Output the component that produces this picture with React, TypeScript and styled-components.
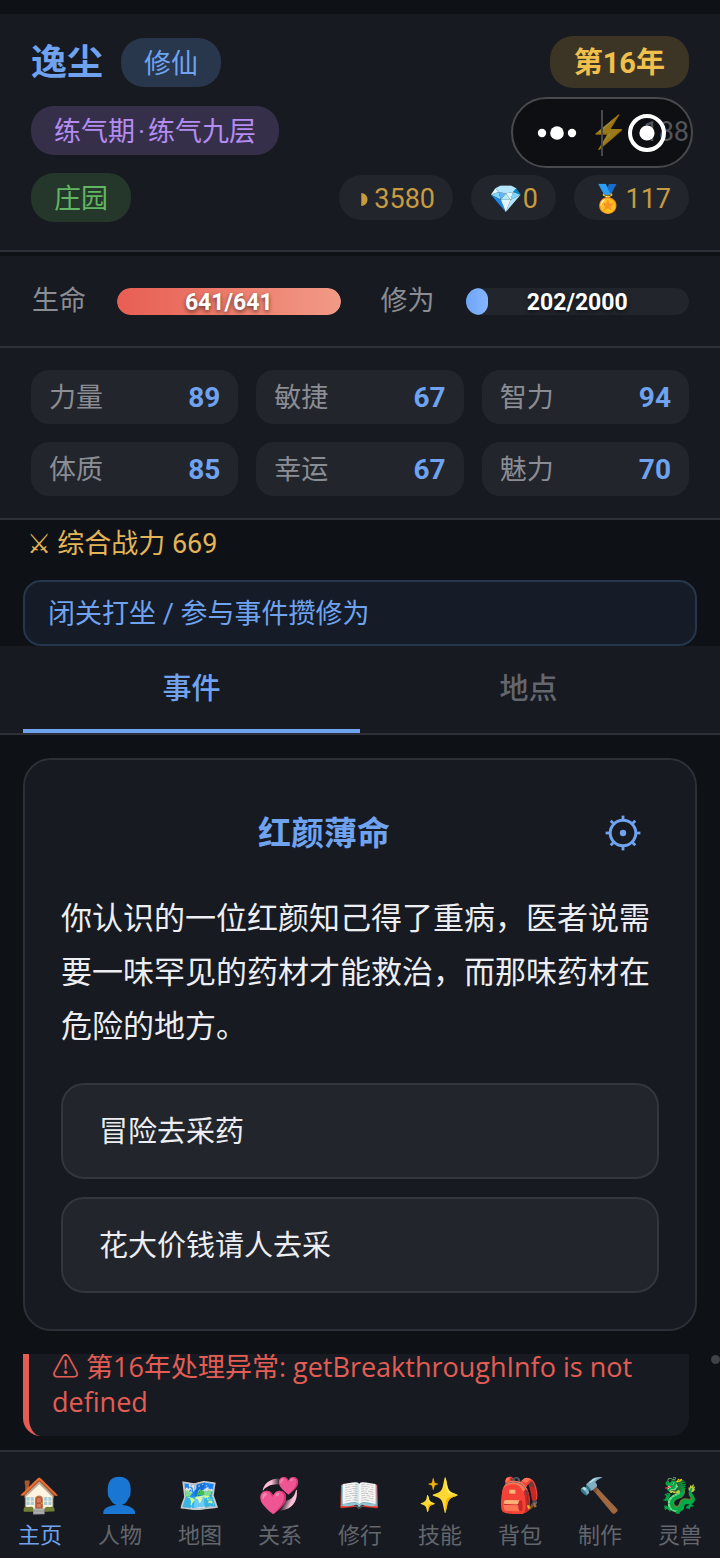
import React, { useState } from 'react';
import styled, { createGlobalStyle } from 'styled-components';

/* ───────────────────────────
   Theme
   ─────────────────────────── */
const COLOR_PAGE = '#0e1116';
const COLOR_PANEL = '#171a21';
const COLOR_CHIP = '#22252c';
const COLOR_LINE = '#2d3037';
const COLOR_BLUE = '#6fa3f0';
const COLOR_MUTED = '#8a8d94';
const COLOR_RED = '#e35d54';

const GlobalStyle = createGlobalStyle`
  *, *::before, *::after {
    box-sizing: border-box;
  }

  body {
    margin: 0;
    background: ${COLOR_PAGE};
    color: #eceef2;
    font-family: Roboto, 'Noto Sans CJK SC', 'Noto Color Emoji', sans-serif;
    font-size: 27px;
    line-height: 36px;
  }

  button {
    font: inherit;
    color: inherit;
    border: none;
    background: none;
    padding: 0;
    cursor: pointer;
  }
`;

/* ───────────────────────────
   Page
   ─────────────────────────── */
const Page = styled.div`
  display: flex;
  flex-direction: column;
  min-height: 100vh;
  padding-top: 14px;
`;

/* ───────────────────────────
   Header
   ─────────────────────────── */
const Header = styled.header`
  position: relative;
  display: flex;
  flex-direction: column;
  gap: 18px;
  padding: 22px 31px 28px;
  margin-bottom: 4px;
  background: ${COLOR_PANEL};
  border-bottom: 2px solid ${COLOR_LINE};
`;

const HeaderRow = styled.div`
  display: flex;
  align-items: center;
  justify-content: space-between;
`;

const HeaderGroup = styled.div`
  display: flex;
  align-items: center;
  gap: 18px;
`;

const PlayerName = styled.h1`
  margin: 0;
  padding-top: 2px;
  font-size: 36px;
  line-height: 48px;
  font-weight: 700;
  color: ${COLOR_BLUE};
`;

type BadgeTone = 'blue' | 'purple' | 'green';

const badgeTones: Record<BadgeTone, string> = {
  blue: 'background: #28374b; color: #6fa3f0;',
  purple: 'background: #362f4a; color: #b48cf2;',
  green: 'background: #24372a; color: #62b563;',
};

const Badge = styled.span<{ $tone: BadgeTone }>`
  padding: 8px 23px 5px;
  border-radius: 23px;
  line-height: 36px;
  ${({ $tone }) => badgeTones[$tone]}
`;

const BadgeDot = styled.span`
  margin: 0 3px;
`;

const YearBadge = styled.span`
  padding: 7px 24px 5px;
  border-radius: 23px;
  background: #3c3526;
  color: #f0c04c;
  font-size: 29px;
  line-height: 40px;
  font-weight: 700;
`;

const Energy = styled.span`
  display: flex;
  align-items: center;
  gap: 14px;
  padding-top: 2px;
  color: ${COLOR_MUTED};
`;

const EnergyIcon = styled.span`
  font-size: 32px;
`;

const Coin = styled.span`
  display: flex;
  align-items: center;
  height: 45px;
  padding: 2px 18px 0;
  border-radius: 23px;
  background: ${COLOR_CHIP};
  color: #c69b41;
`;

/* floats over the header like a host-app menu */
const Capsule = styled.div`
  position: absolute;
  top: 83px;
  right: 27px;
  display: flex;
  align-items: center;
  width: 182px;
  height: 71px;
  border: 2px solid #48494d;
  border-radius: 36px;
  background: rgba(0, 0, 0, 0.4);
`;

const CapsuleButton = styled.button`
  flex: 1;
  display: flex;
  align-items: center;
  justify-content: center;
  height: 46px;

  & + & {
    border-left: 2px solid #48494d;
  }
`;

/* ───────────────────────────
   Bars
   ─────────────────────────── */
const Bars = styled.section`
  display: flex;
  gap: 40px;
  padding: 27px 31px 27px 32px;
  background: ${COLOR_PANEL};
  border-bottom: 2px solid ${COLOR_LINE};
`;

const BarItem = styled.div`
  flex: 1;
  display: flex;
  align-items: center;
  gap: 31px;
  color: ${COLOR_MUTED};
`;

const BarTrack = styled.div`
  position: relative;
  flex: 1;
  height: 27px;
  border-radius: 14px;
  overflow: hidden;
  background: ${COLOR_CHIP};
`;

const BarFill = styled.div<{ $from: string; $to: string }>`
  height: 100%;
  border-radius: 14px;
  background: linear-gradient(90deg, ${({ $from }) => $from}, ${({ $to }) => $to});
`;

const BarText = styled.span`
  position: absolute;
  inset: 0;
  text-align: center;
  font-size: 23px;
  line-height: 29px;
  font-weight: 700;
  color: #ffffff;
  text-shadow: 0 2px 4px rgba(0, 0, 0, 0.6);
`;

/* ───────────────────────────
   Attributes
   ─────────────────────────── */
const Attributes = styled.dl`
  display: grid;
  grid-template-columns: repeat(3, 1fr);
  gap: 18px;
  margin: 0;
  padding: 22px 31px;
  background: ${COLOR_PANEL};
  border-bottom: 2px solid ${COLOR_LINE};
`;

const Attribute = styled.div`
  display: flex;
  align-items: center;
  justify-content: space-between;
  padding: 10px 18px 8px;
  border-radius: 18px;
  background: ${COLOR_CHIP};
`;

const AttributeName = styled.dt`
  color: ${COLOR_MUTED};
`;

const AttributeValue = styled.dd`
  margin: 0;
  color: ${COLOR_BLUE};
  font-size: 28px;
  font-weight: 700;
`;

/* ───────────────────────────
   Power / hint
   ─────────────────────────── */
const Power = styled.p`
  display: flex;
  align-items: center;
  gap: 6px;
  margin: 0;
  padding: 6px 27px 18px;
  color: #e3b558;
`;

const PowerIcon = styled.span`
  font-family: 'DejaVu Sans', sans-serif;
  font-size: 27px;
`;

const Hint = styled.p`
  margin: 0 23px;
  padding: 14px 23px 12px;
  border: 2px solid #25364d;
  border-radius: 18px;
  background: #151c27;
  color: ${COLOR_BLUE};
`;

/* ───────────────────────────
   Tabs
   ─────────────────────────── */
const Tabs = styled.div`
  display: flex;
  padding: 0 23px;
  background: ${COLOR_PANEL};
  border-bottom: 2px solid ${COLOR_LINE};
`;

const Tab = styled.button<{ $active: boolean }>`
  && {
    flex: 1;
    padding: 23px 0 20px;
    border-bottom: 4px solid ${({ $active }) => ($active ? COLOR_BLUE : 'transparent')};
    color: ${({ $active }) => ($active ? COLOR_BLUE : '#63666d')};
    font-size: 29px;
    line-height: 40px;
    font-weight: 500;
  }
`;

/* ───────────────────────────
   Event card
   ─────────────────────────── */
const EventCard = styled.article`
  margin: 23px;
  padding: 36px;
  border: 2px solid ${COLOR_LINE};
  border-radius: 28px;
  background: ${COLOR_PANEL};
`;

const EventHead = styled.div`
  display: flex;
  align-items: center;
  margin-bottom: 22px;
`;

const EventTitle = styled.h2`
  flex: 1;
  margin: 0;
  padding-top: 2px;
  text-align: center;
  font-size: 33px;
  line-height: 48px;
  font-weight: 700;
  color: ${COLOR_BLUE};
`;

const GearButton = styled.button`
  display: flex;
  align-items: center;
  justify-content: center;
  width: 72px;
  height: 74px;
`;

const EventText = styled.p`
  margin: 0 0 29px;
  font-size: 31px;
  line-height: 54px;
`;

const Options = styled.div`
  display: flex;
  flex-direction: column;
  gap: 18px;
`;

const OptionButton = styled.button`
  && {
    padding: 25px 36px 23px;
    border: 2px solid #33363d;
    border-radius: 23px;
    background: ${COLOR_CHIP};
    font-size: 29px;
    line-height: 44px;
    text-align: left;
  }
`;

/* ───────────────────────────
   Log
   ─────────────────────────── */
const Log = styled.section`
  display: flex;
  flex-direction: column;
  justify-content: flex-end;
  height: 82px;
  margin: 0 31px 14px 23px;
  overflow: hidden;
`;

const LogEntry = styled.p`
  margin: 0;
  padding: 17px 23px;
  border-left: 6px solid ${COLOR_RED};
  border-radius: 18px;
  background: ${COLOR_PANEL};
  color: ${COLOR_RED};
  font-family: 'Open Sans', 'Noto Sans CJK SC', sans-serif;
  line-height: 35px;
`;

const ScrollDot = styled.span`
  position: absolute;
  top: 1355px;
  right: 0;
  width: 9px;
  height: 9px;
  border-radius: 50%;
  background: #3f4248;
`;

/* ───────────────────────────
   Bottom nav
   ─────────────────────────── */
const BottomNav = styled.nav`
  display: flex;
  margin-top: auto;
  padding: 18px 0 6px;
  background: ${COLOR_PANEL};
  border-top: 2px solid ${COLOR_LINE};
`;

const NavLink = styled.a<{ $active: boolean }>`
  flex: 1;
  display: flex;
  flex-direction: column;
  align-items: center;
  text-decoration: none;
  font-size: 22px;
  line-height: 32px;
  color: ${({ $active }) => ($active ? COLOR_BLUE : '#63666d')};
`;

const NavIcon = styled.span`
  font-size: 34px;
  line-height: 50px;
`;

/* ───────────────────────────
   Icons
   ─────────────────────────── */
const GearIcon = () => (
  <svg width="36" height="36" viewBox="-18 -18 36 36" fill="none" stroke={COLOR_BLUE}>
    <circle r="12.8" strokeWidth="3" />
    <circle r="3.2" fill={COLOR_BLUE} stroke="none" />
    {[0, 45, 90, 135, 180, 225, 270, 315].map((angle) => (
      <path key={angle} d="M0-13V-17.4" strokeWidth="2.8" transform={`rotate(${angle})`} />
    ))}
  </svg>
);

const DotsIcon = () => (
  <svg width="40" height="16" viewBox="0 0 40 16" fill="#ffffff">
    <circle cx="5" cy="8" r="4.2" />
    <circle cx="20" cy="8" r="6.8" />
    <circle cx="35" cy="8" r="4.2" />
  </svg>
);

const TargetIcon = () => (
  <svg width="40" height="40" viewBox="-20 -20 40 40">
    <circle r="17" fill="none" stroke="#ffffff" strokeWidth="4" />
    <circle r="7.6" fill="#ffffff" />
  </svg>
);

const MoneyIcon = () => (
  <svg width="17" height="36" viewBox="0 0 17 36">
    <path d="M4 12C8 12 10.5 15 10.5 18.5S8 25 4 25Z" fill="#c69b41" />
    <path d="M4 12H5V25H4Z" fill="#b5701d" />
  </svg>
);

/* ───────────────────────────
   Data
   ─────────────────────────── */
const attributes = [
  { name: '力量', value: 89 },
  { name: '敏捷', value: 67 },
  { name: '智力', value: 94 },
  { name: '体质', value: 85 },
  { name: '幸运', value: 67 },
  { name: '魅力', value: 70 },
];

const bars = [
  { label: '生命', value: 641, max: 641, from: '#e85e53', to: '#f29a86' },
  { label: '修为', value: 202, max: 2000, from: '#6fa5f8', to: '#85b6ff' },
];

const navItems = [
  { icon: '🏠', label: '主页' },
  { icon: '👤', label: '人物' },
  { icon: '🗺️', label: '地图' },
  { icon: '💞', label: '关系' },
  { icon: '📖', label: '修行' },
  { icon: '✨', label: '技能' },
  { icon: '🎒', label: '背包' },
  { icon: '🔨', label: '制作' },
  { icon: '🐉', label: '灵兽' },
];

const tabs = ['事件', '地点'];

/* ───────────────────────────
   Component
   ─────────────────────────── */
const App: React.FC = () => {
  const [activeTab, setActiveTab] = useState(tabs[0]);

  return (
    <Page>
      <GlobalStyle />
      <Header>
        <HeaderRow>
          <HeaderGroup>
            <PlayerName>逸尘</PlayerName>
            <Badge $tone="blue">修仙</Badge>
          </HeaderGroup>
          <YearBadge>第16年</YearBadge>
        </HeaderRow>
        <HeaderRow>
          <Badge $tone="purple">练气期<BadgeDot>·</BadgeDot>练气九层</Badge>
          <Energy>
            <EnergyIcon>⚡</EnergyIcon>
            <span>188</span>
          </Energy>
        </HeaderRow>
        <HeaderRow>
          <Badge $tone="green">庄园</Badge>
          <HeaderGroup>
            <Coin><MoneyIcon />3580</Coin>
            <Coin>💎0</Coin>
            <Coin>🏅117</Coin>
          </HeaderGroup>
        </HeaderRow>
        <Capsule>
          <CapsuleButton aria-label="更多"><DotsIcon /></CapsuleButton>
          <CapsuleButton aria-label="关闭"><TargetIcon /></CapsuleButton>
        </Capsule>
      </Header>

      <Bars>
        {bars.map((bar) => (
          <BarItem key={bar.label}>
            <span>{bar.label}</span>
            <BarTrack>
              <BarFill $from={bar.from} $to={bar.to} style={{ width: `${(bar.value / bar.max) * 100}%` }} />
              <BarText>{bar.value}/{bar.max}</BarText>
            </BarTrack>
          </BarItem>
        ))}
      </Bars>

      <Attributes>
        {attributes.map((item) => (
          <Attribute key={item.name}>
            <AttributeName>{item.name}</AttributeName>
            <AttributeValue>{item.value}</AttributeValue>
          </Attribute>
        ))}
      </Attributes>

      <Power>
        <PowerIcon>{'⚔\uFE0E'}</PowerIcon>
        综合战力 669
      </Power>
      <Hint>闭关打坐 / 参与事件攒修为</Hint>

      <Tabs role="tablist">
        {tabs.map((tab) => (
          <Tab
            key={tab}
            role="tab"
            aria-selected={tab === activeTab}
            $active={tab === activeTab}
            onClick={() => setActiveTab(tab)}
          >
            {tab}
          </Tab>
        ))}
      </Tabs>

      <EventCard>
        <EventHead>
          <EventTitle>红颜薄命</EventTitle>
          <GearButton aria-label="设置"><GearIcon /></GearButton>
        </EventHead>
        <EventText>
          你认识的一位红颜知己得了重病，医者说需要一味罕见的药材才能救治，而那味药材在危险的地方。
        </EventText>
        <Options>
          <OptionButton>冒险去采药</OptionButton>
          <OptionButton>花大价钱请人去采</OptionButton>
        </Options>
      </EventCard>

      <Log>
        <LogEntry>⚠ 第16年处理异常: getBreakthroughInfo is not defined</LogEntry>
      </Log>
      <ScrollDot />

      <BottomNav>
        {navItems.map((item, index) => (
          <NavLink key={item.label} href={`#${index}`} $active={index === 0}>
            <NavIcon>{item.icon}</NavIcon>
            {item.label}
          </NavLink>
        ))}
      </BottomNav>
    </Page>
  );
};

export default App;
